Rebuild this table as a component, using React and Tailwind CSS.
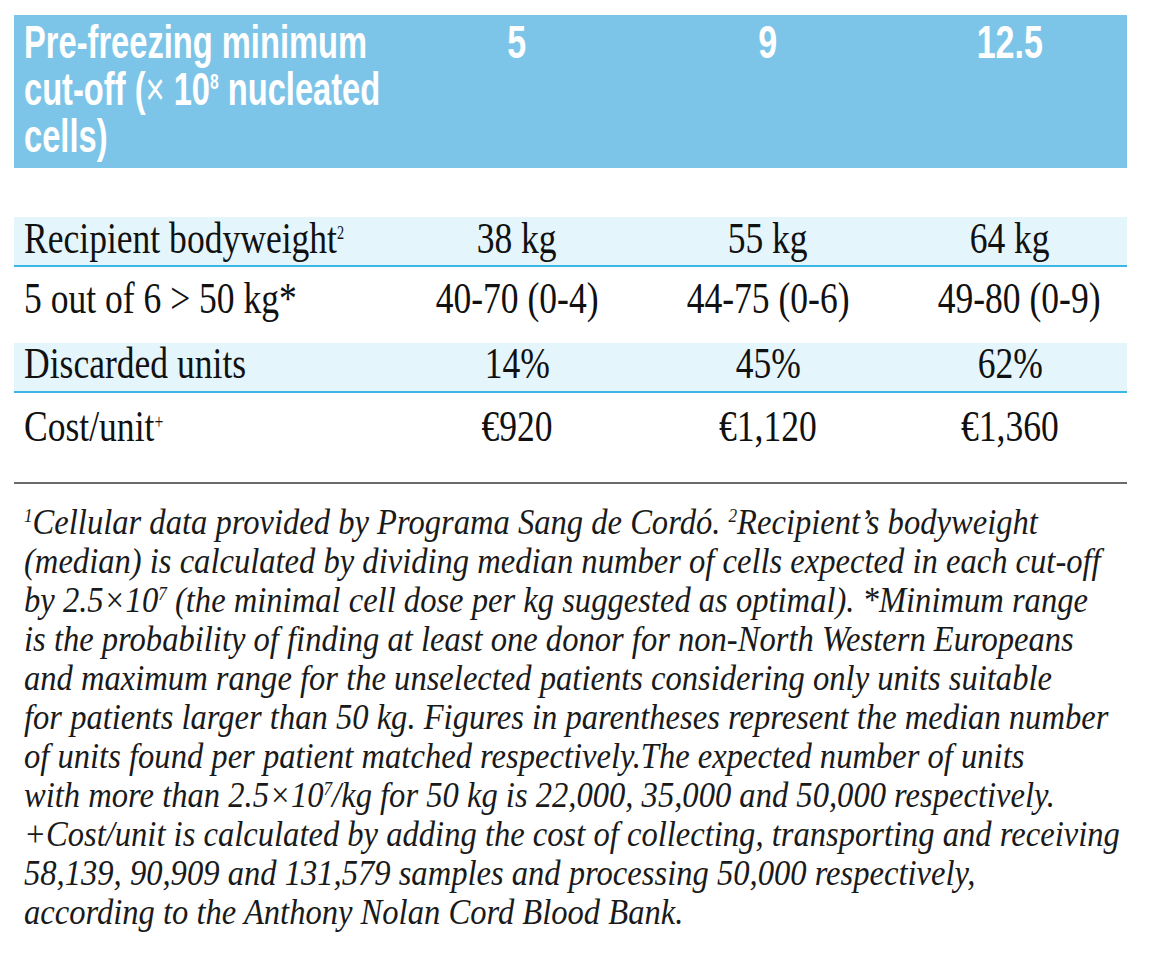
export default function App() {
  const cols = "grid grid-cols-[400px_206px_296px_188px_1fr]";
  const serif = "font-['Liberation_Serif','Times_New_Roman',serif]";
  const rows = [
    {
      label: (
        <>
          Recipient bodyweight
          <span className="relative -top-[14px] text-[18px]">2</span>
        </>
      ),
      vals: ["38 kg", "55 kg", "64 kg"],
      cls: "h-[50px] bg-[#e4f5fc] border-b-2 border-[#3bb6e6] pt-[1px]",
    },
    {
      label: <>5 out of 6 &gt; 50 kg*</>,
      vals: ["40-70 (0-4)", "44-75 (0-6)", "49-80 (0-9)"],
      cls: "h-[76px] pt-[11px]",
    },
    {
      label: <>Discarded units</>,
      vals: ["14%", "45%", "62%"],
      cls: "h-[50px] bg-[#e4f5fc] border-b-2 border-[#3bb6e6] pt-0",
    },
    {
      label: (
        <>
          Cost/unit
          <span className="relative -top-[12px] text-[20px]">+</span>
        </>
      ),
      vals: ["€920", "€1,120", "€1,360"],
      cls: "h-[91px] border-b-2 border-[#6b6b6b] pt-[13px]",
    },
  ];

  const sup = (t) => (
    <span className="relative -top-[12px] text-[19px] leading-none">{t}</span>
  );

  const notes = [
    <>
      {sup("1")}Cellular data provided by Programa Sang de Cordó. {sup("2")}Recipient’s bodyweight
    </>,
    <>(median) is calculated by dividing median number of cells expected in each cut-off</>,
    <>
      by 2.5×10{sup("7")} (the minimal cell dose per kg suggested as optimal). *Minimum range
    </>,
    <>is the probability of finding at least one donor for non-North Western Europeans</>,
    <>and maximum range for the unselected patients considering only units suitable</>,
    <>for patients larger than 50 kg. Figures in parentheses represent the median number</>,
    <>of units found per patient matched respectively.The expected number of units</>,
    <>
      with more than 2.5×10{sup("7")}/kg for 50 kg is 22,000, 35,000 and 50,000 respectively.
    </>,
    <>+Cost/unit is calculated by adding the cost of collecting, transporting and receiving</>,
    <>58,139, 90,909 and 131,579 samples and processing 50,000 respectively,</>,
    <>according to the Anthony Nolan Cord Blood Bank.</>,
  ];

  return (
    <div className="w-[1152px] h-[953px] bg-white overflow-hidden">
      <div className="ml-[14px] pt-[15px] w-[1113px]">
        <div
          className={`${cols} h-[153px] bg-[#7dc5e8] text-white font-['Liberation_Sans',Arial,sans-serif] font-bold text-[46px] leading-[47px] pt-[4px]`}
        >
          <div className="pl-[10px]">
            <div className="origin-left scale-x-[0.71] whitespace-nowrap">
              Pre-freezing minimum
              <br />
              cut-off (<span className="font-normal leading-none">×</span> 10
              <span className="relative -top-[16px] text-[22px] leading-none">8</span> nucleated
              <br />
              cells)
            </div>
          </div>
          {["5", "9", "12.5"].map((v) => (
            <div key={v} className="text-center">
              <span className="inline-block scale-x-[0.74]">{v}</span>
            </div>
          ))}
          <div />
        </div>

        <div className={`mt-[49px] ${serif} text-[45px] leading-[40px] text-[#111111]`}>
          {rows.map((r, i) => (
            <div key={i} className={`${cols} ${r.cls}`}>
              <div className="pl-[10px]">
                <div className="origin-left scale-x-[0.79] whitespace-nowrap">{r.label}</div>
              </div>
              {r.vals.map((v) => (
                <div key={v} className="text-center whitespace-nowrap">
                  <span className="inline-block scale-x-[0.79]">{v}</span>
                </div>
              ))}
              <div />
            </div>
          ))}
        </div>

        <div
          className={`mt-[19px] pl-[10px] ${serif} italic text-[36px] leading-[39px] text-[#1a1a1a]`}
        >
          <div className="origin-left scale-x-[0.905] whitespace-nowrap">
            {notes.map((n, i) => (
              <div key={i}>{n}</div>
            ))}
          </div>
        </div>
      </div>
    </div>
  );
}
